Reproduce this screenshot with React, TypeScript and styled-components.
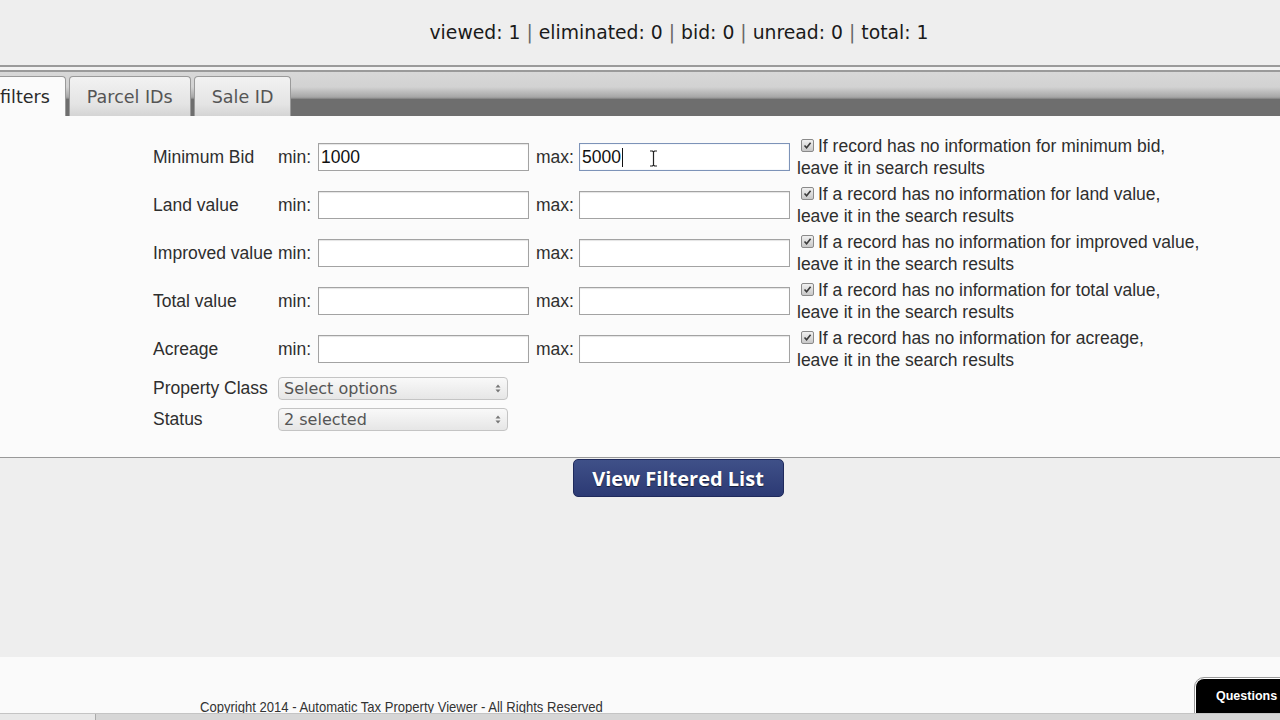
import React from 'react';
import styled, { createGlobalStyle } from 'styled-components';

const GlobalStyle = createGlobalStyle`
  html, body {
    margin: 0;
    padding: 0;
    background: #eeeeee;
    overflow: hidden;
  }
  #root {
    width: 1280px;
    height: 720px;
  }
`;

const Page = styled.div`
  display: flex;
  flex-direction: column;
  width: 1280px;
  height: 720px;
  overflow: hidden;
  background: #eeeeee;
`;

const Stats = styled.header`
  height: 65px;
  flex-shrink: 0;
  display: flex;
  align-items: center;
  justify-content: center;
  padding-left: 78px;
  box-sizing: border-box;
  font-family: "DejaVu Sans", sans-serif;
  font-size: 18.8px;
  color: #1a1a1a;
  white-space: pre;
`;

const Pipe = styled.span`
  color: #666;
`;

const DoubleRule = styled.div`
  height: 3px;
  flex-shrink: 0;
  border-top: 2px solid #9a9a9a;
  border-bottom: 2px solid #9a9a9a;
  background: #f2f2f2;
`;

const TabBar = styled.nav`
  height: 44px;
  flex-shrink: 0;
  display: flex;
  align-items: flex-end;
  gap: 3px;
  background: linear-gradient(
    to bottom,
    #d8d8d8 0%,
    #d2d2d2 34%,
    #a6a6a6 57%,
    #8c8c8c 60%,
    #6e6e6e 62%,
    #6e6e6e 100%
  );
`;

const Tab = styled.button<{ $active?: boolean }>`
  height: 40px;
  padding: 0 17px;
  margin: 0;
  border: 1px solid #9a9a9a;
  border-bottom: none;
  border-radius: 4px 4px 0 0;
  font-family: "DejaVu Sans", sans-serif;
  font-size: 17.5px;
  color: ${(p) => (p.$active ? '#2a2a2a' : '#555')};
  background: ${(p) =>
    p.$active ? '#fbfbfb' : 'linear-gradient(to bottom, #f2f2f2, #e4e4e4 70%, #d4d4d4)'};
  cursor: pointer;

  &:first-child {
    margin-left: -17px;
    padding-right: 15px;
    border-left: none;
  }
`;

const Filters = styled.section`
  flex-shrink: 0;
  background: #fbfbfb;
  padding: 19px 0 26px 153px;
  border-bottom: 1px solid #999;
  font-family: "Liberation Sans", Arial, sans-serif;
  font-size: 17.5px;
  color: #2e2e2e;
  display: flex;
  flex-direction: column;
`;

const RangeRows = styled.div`
  display: flex;
  flex-direction: column;
  gap: 4px;
`;

const RangeRow = styled.div`
  height: 44px;
  display: grid;
  grid-template-columns: 125px 40px 211px 7px 43px 211px 7px auto;
  align-items: center;
`;

const Label = styled.span`
  white-space: nowrap;
`;

const Field = styled.div<{ $focused?: boolean }>`
  position: relative;
  height: 28px;
  box-sizing: border-box;
  display: flex;
  align-items: center;
  padding-left: 2px;
  background: #fff;
  border: 1px solid ${(p) => (p.$focused ? '#7d93b8' : '#a3a3a3')};
  box-shadow: ${(p) => (p.$focused ? 'inset 0 0 1px #9fb3d6' : 'inset 0 1px 1px #e4e4e4')};
  font-size: 17.5px;
  color: #111;
`;

const Caret = styled.span`
  display: inline-block;
  width: 1px;
  height: 19px;
  background: #111;
  margin-left: 1px;
`;

const Pointer = styled.svg`
  position: absolute;
  left: 69px;
  top: 6px;
`;

const Note = styled.div`
  grid-column: 8;
  line-height: 22px;
  white-space: nowrap;
`;

const Check = styled.span`
  display: inline-flex;
  align-items: center;
  justify-content: center;
  width: 11px;
  height: 11px;
  margin: 0 4px 0 4px;
  vertical-align: 2px;
  border: 1px solid #8a8a8a;
  border-radius: 2px;
  background: linear-gradient(to bottom, #f0f0f0, #c8c8c8);
`;

const SelectRows = styled.div`
  display: flex;
  flex-direction: column;
  gap: 8px;
  margin-top: 6px;
`;

const SelectRow = styled.div`
  display: grid;
  grid-template-columns: 125px 230px;
  align-items: center;
  height: 23px;
`;

const MultiSelect = styled.div`
  height: 23px;
  box-sizing: border-box;
  display: flex;
  align-items: center;
  justify-content: space-between;
  padding: 0 6px 0 5px;
  border: 1px solid #c4c4c4;
  border-radius: 4px;
  background: linear-gradient(to bottom, #f9f9f9, #e6e6e6);
  font-family: "DejaVu Sans", sans-serif;
  font-size: 16px;
  color: #555;
`;

const Actions = styled.div`
  height: 40px;
  flex-shrink: 0;
  display: flex;
  justify-content: center;
  align-items: flex-start;
  padding-left: 76px;
  padding-top: 1px;
  box-sizing: border-box;
`;

const PrimaryButton = styled.button`
  width: 211px;
  height: 38px;
  border: 1px solid #1f2a5c;
  border-radius: 5px;
  background: linear-gradient(to bottom, #3f5088, #2c3a74);
  color: #fff;
  font-family: "Open Sans", sans-serif;
  font-weight: 700;
  font-size: 20px;
  text-shadow: 0 1px 1px rgba(0, 0, 0, 0.55);
  cursor: pointer;
`;

const Spacer = styled.div`
  flex: 1;
`;

const Footer = styled.footer`
  height: 56px;
  flex-shrink: 0;
  display: flex;
  align-items: flex-end;
  justify-content: space-between;
  padding-left: 200px;
  background: #fafafa;
  overflow: hidden;
`;

const Copyright = styled.span`
  font-family: "Liberation Sans", Arial, sans-serif;
  font-size: 14.5px;
  line-height: 15px;
  margin-bottom: -2px;
  color: #333;
  white-space: nowrap;
  transform: scaleX(0.9);
  transform-origin: left bottom;
`;

const Questions = styled.button`
  flex-shrink: 0;
  width: 150px;
  height: 35px;
  margin-right: -65px;
  padding: 0 0 0 20px;
  text-align: left;
  border: 1px solid #fff;
  border-bottom: none;
  border-radius: 9px 0 0 0;
  outline: 1px solid #9a9a9a;
  background: #000;
  color: #fff;
  font-family: "Liberation Sans", Arial, sans-serif;
  font-weight: 700;
  font-size: 12.5px;
  white-space: nowrap;
`;

const BottomBar = styled.div`
  height: 7px;
  flex-shrink: 0;
  display: flex;
  background: #d6d6d6;
  border-top: 1px solid #c4c4c4;
  box-sizing: border-box;
`;

const BarBox = styled.div`
  width: 95px;
  border-right: 1px solid #aaa;
  background: #e8e8e8;
`;

const CheckIcon = () => (
  <svg width="9" height="9" viewBox="0 0 9 9">
    <path d="M1.5 4.5 L3.6 6.8 L7.6 1.8" fill="none" stroke="#3a3a3a" strokeWidth="1.6" />
  </svg>
);

const UpDown = () => (
  <svg width="6" height="9" viewBox="0 0 6 9">
    <path d="M3 0.5 L5.5 3.5 H0.5 Z M3 8.5 L5.5 5.5 H0.5 Z" fill="#777" />
  </svg>
);

type Range = {
  label: string;
  min?: string;
  max?: string;
  focused?: boolean;
  note: [string, string];
};

const ranges: Range[] = [
  {
    label: 'Minimum Bid',
    min: '1000',
    max: '5000',
    focused: true,
    note: ['If record has no information for minimum bid,', 'leave it in search results'],
  },
  {
    label: 'Land value',
    note: ['If a record has no information for land value,', 'leave it in the search results'],
  },
  {
    label: 'Improved value',
    note: ['If a record has no information for improved value,', 'leave it in the search results'],
  },
  {
    label: 'Total value',
    note: ['If a record has no information for total value,', 'leave it in the search results'],
  },
  {
    label: 'Acreage',
    note: ['If a record has no information for acreage,', 'leave it in the search results'],
  },
];

const stats = [
  ['viewed', 1],
  ['eliminated', 0],
  ['bid', 0],
  ['unread', 0],
  ['total', 1],
] as const;

export default function App() {
  return (
    <>
      <GlobalStyle />
      <Page>
        <Stats>
          {stats.map(([name, count], i) => (
            <React.Fragment key={name}>
              {i > 0 && <Pipe> | </Pipe>}
              {`${name}: ${count}`}
            </React.Fragment>
          ))}
        </Stats>
        <DoubleRule />
        <TabBar>
          <Tab $active>filters</Tab>
          <Tab>Parcel IDs</Tab>
          <Tab>Sale ID</Tab>
        </TabBar>

        <Filters>
          <RangeRows>
            {ranges.map((r) => (
              <RangeRow key={r.label}>
                <Label>{r.label}</Label>
                <Label>min:</Label>
                <Field>{r.min}</Field>
                <span />
                <Label>max:</Label>
                <Field $focused={r.focused}>
                  {r.max}
                  {r.focused && <Caret />}
                  {r.focused && (
                    <Pointer width="9" height="17" viewBox="0 0 9 17">
                      <path
                        d="M1 1 H3.5 L4.5 2 L5.5 1 H8 M4.5 2 V15 M1 16 H3.5 L4.5 15 L5.5 16 H8"
                        fill="none"
                        stroke="#222"
                        strokeWidth="1.2"
                      />
                    </Pointer>
                  )}
                </Field>
                <span />
                <Note>
                  <Check>
                    <CheckIcon />
                  </Check>
                  {r.note[0]}
                  <br />
                  {r.note[1]}
                </Note>
              </RangeRow>
            ))}
          </RangeRows>
          <SelectRows>
            <SelectRow>
              <Label>Property Class</Label>
              <MultiSelect>
                Select options
                <UpDown />
              </MultiSelect>
            </SelectRow>
            <SelectRow>
              <Label>Status</Label>
              <MultiSelect>
                2 selected
                <UpDown />
              </MultiSelect>
            </SelectRow>
          </SelectRows>
        </Filters>

        <Actions>
          <PrimaryButton>View Filtered List</PrimaryButton>
        </Actions>
        <Spacer />
        <Footer>
          <Copyright>Copyright 2014 - Automatic Tax Property Viewer - All Rights Reserved</Copyright>
          <Questions>Questions or Comments?</Questions>
        </Footer>
        <BottomBar>
          <BarBox />
        </BottomBar>
      </Page>
    </>
  );
}
